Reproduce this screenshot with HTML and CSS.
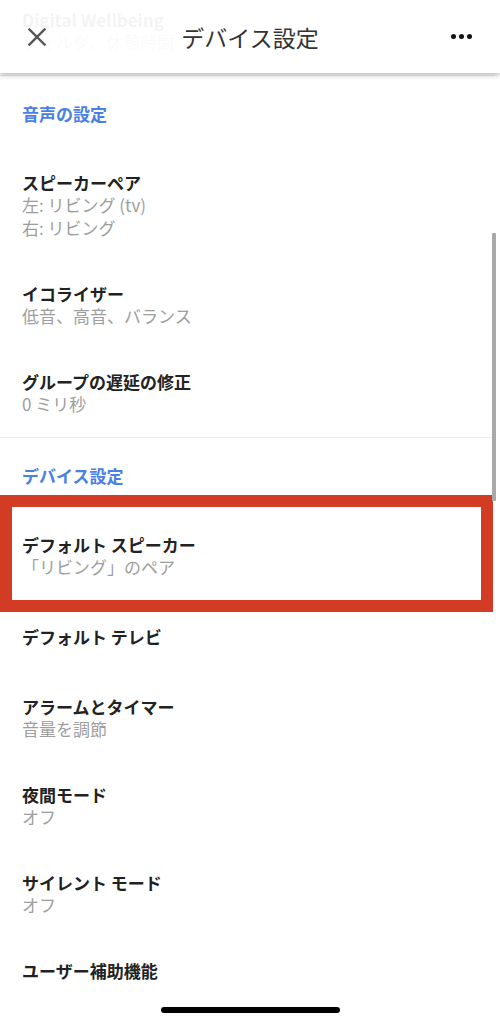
FILE: index.html
```html
<!DOCTYPE html>
<html lang="ja">
<head>
<meta charset="utf-8">
<title>デバイス設定</title>
<link rel="stylesheet" href="styles.css">
</head>
<body>
<div class="screen">
  <main class="list">
    <div class="item">
      <div class="item-title">Digital Wellbeing</div>
      <div class="item-sub">フォルダ、休憩時間</div>
    </div>
    <div class="divider"></div>
    <div class="section-title">音声の設定</div>
    <div class="item">
      <div class="item-title">スピーカーペア</div>
      <div class="item-sub">左: リビング (tv)</div>
      <div class="item-sub">右: リビング</div>
    </div>
    <div class="item">
      <div class="item-title">イコライザー</div>
      <div class="item-sub">低音、高音、バランス</div>
    </div>
    <div class="item">
      <div class="item-title">グループの遅延の修正</div>
      <div class="item-sub">0 ミリ秒</div>
    </div>
    <div class="divider"></div>
    <div class="section-title">デバイス設定</div>
    <div class="item highlighted">
      <div class="item-title">デフォルト スピーカー</div>
      <div class="item-sub">「リビング」のペア</div>
    </div>
    <div class="item single">
      <div class="item-title">デフォルト テレビ</div>
    </div>
    <div class="item">
      <div class="item-title">アラームとタイマー</div>
      <div class="item-sub">音量を調節</div>
    </div>
    <div class="item">
      <div class="item-title">夜間モード</div>
      <div class="item-sub">オフ</div>
    </div>
    <div class="item">
      <div class="item-title">サイレント モード</div>
      <div class="item-sub">オフ</div>
    </div>
    <div class="item">
      <div class="item-title">ユーザー補助機能</div>
      <div class="item-sub">&nbsp;</div>
    </div>
  </main>

  <header class="appbar">
    <button class="icon-btn close" aria-label="閉じる">
      <svg width="18" height="18" viewBox="0 0 18 18"><path d="M1.5 1.5 L16.5 16.5 M16.5 1.5 L1.5 16.5" stroke="#555" stroke-width="2.4" stroke-linecap="square" fill="none"/></svg>
    </button>
    <h1 class="appbar-title">デバイス設定</h1>
    <button class="icon-btn more" aria-label="その他">
      <span class="dot"></span><span class="dot"></span><span class="dot"></span>
    </button>
  </header>

  <div class="scrollbar"></div>
  <div class="home-indicator"></div>
</div>
</body>
</html>
```

FILE: styles.css
```css
* { box-sizing: border-box; }

html, body {
  margin: 0;
  padding: 0;
  background: #fff;
}

body {
  font-family: "Noto Sans CJK JP", "Noto Sans", Roboto, sans-serif;
  color: #222;
}

.screen {
  position: relative;
  width: 500px;
  height: 1024px;
  overflow: hidden;
  background: #fff;
}

/* scrolled content */
.list {
  margin-top: -13px;
  display: flex;
  flex-direction: column;
}

.item {
  position: relative;
  padding: 21px 22px 21.5px;
  display: flex;
  flex-direction: column;
  justify-content: center;
}

.item.single {
  min-height: 74px;
  padding-top: 0;
  padding-bottom: 0;
}

.item-title {
  font-size: 17px;
  line-height: 23px;
  font-weight: 700;
  color: #222;
}

.item-sub {
  font-size: 17px;
  line-height: 22.5px;
  color: #9e9e9e;
}

.divider {
  height: 1px;
  background: #ececec;
  margin-right: 5px;
}

.section-title {
  padding: 26px 22px 25px;
  font-size: 17px;
  line-height: 23px;
  font-weight: 700;
  color: #4a80e4;
}

/* red annotation frame */
.highlighted::after {
  content: "";
  position: absolute;
  top: -17px;
  bottom: -12px;
  left: 0;
  right: 7px;
  border: 12px solid #d23c24;
  pointer-events: none;
}

/* app bar overlay */
.appbar {
  position: absolute;
  top: 0;
  left: 0;
  right: 0;
  height: 73px;
  background: rgba(255, 255, 255, 0.95);
  box-shadow: 0 2px 5px rgba(0, 0, 0, 0.28);
  display: grid;
  grid-template-columns: 1fr auto 1fr;
  align-items: center;
  padding: 0 28px;
  z-index: 2;
}

.icon-btn {
  border: 0;
  background: none;
  padding: 0;
  display: flex;
  align-items: center;
  cursor: pointer;
}

.close {
  justify-self: start;
}

.close svg { display: block; }

.appbar-title {
  margin: 0;
  font-size: 23px;
  line-height: 30px;
  font-weight: 400;
  color: #333;
}

.more {
  justify-self: end;
  gap: 3px;
}

.dot {
  width: 5px;
  height: 5px;
  border-radius: 50%;
  background: #111;
}

.scrollbar {
  position: absolute;
  left: 492px;
  top: 233px;
  width: 4px;
  height: 268px;
  background: #a9a9a9;
  border-radius: 1px;
  z-index: 3;
}

.home-indicator {
  position: absolute;
  left: 161px;
  top: 1007px;
  width: 179px;
  height: 6px;
  border-radius: 3px;
  background: #000;
  z-index: 3;
}
```
